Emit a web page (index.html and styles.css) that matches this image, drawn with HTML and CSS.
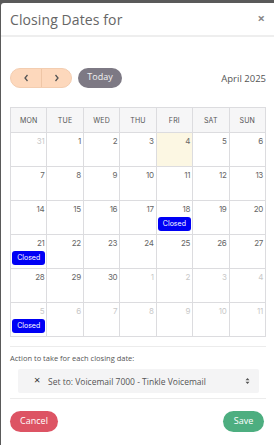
FILE: index.html
```html
<!DOCTYPE html>
<html>
<head>
<meta charset="utf-8">
<link rel="stylesheet" href="styles.css">
</head>
<body>
<div class="modal">
  <div class="modal-header">
    <span class="title">Closing Dates for</span>
    <span class="close">&times;</span>
  </div>
  <div class="modal-body">
    <div class="toolbar">
      <div class="left">
        <div class="navgroup">
          <button class="nav">
            <svg width="7" height="8" viewBox="0 0 7 8"><path d="M4.5 1 L2 4 L4.5 7" fill="none" stroke="#555" stroke-width="1.3"/></svg>
          </button>
          <button class="nav">
            <svg width="7" height="8" viewBox="0 0 7 8"><path d="M2.5 1 L5 4 L2.5 7" fill="none" stroke="#555" stroke-width="1.3"/></svg>
          </button>
        </div>
        <button class="today">Today</button>
      </div>
      <div class="month">April 2025</div>
    </div>
    <table class="cal">
      <thead>
        <tr><th>MON</th><th>TUE</th><th>WED</th><th>THU</th><th>FRI</th><th>SAT</th><th>SUN</th></tr>
      </thead>
      <tbody>
        <tr><td class="other"><span class="num">31</span></td><td><span class="num">1</span></td><td><span class="num">2</span></td><td><span class="num">3</span></td><td class="today-cell"><span class="num">4</span></td><td><span class="num">5</span></td><td><span class="num">6</span></td></tr>
        <tr><td><span class="num">7</span></td><td><span class="num">8</span></td><td><span class="num">9</span></td><td><span class="num">10</span></td><td><span class="num">11</span></td><td><span class="num">12</span></td><td><span class="num">13</span></td></tr>
        <tr><td><span class="num">14</span></td><td><span class="num">15</span></td><td><span class="num">16</span></td><td><span class="num">17</span></td><td><span class="num">18</span><span class="badge">Closed</span></td><td><span class="num">19</span></td><td><span class="num">20</span></td></tr>
        <tr><td><span class="num">21</span><span class="badge">Closed</span></td><td><span class="num">22</span></td><td><span class="num">23</span></td><td><span class="num">24</span></td><td><span class="num">25</span></td><td><span class="num">26</span></td><td><span class="num">27</span></td></tr>
        <tr><td><span class="num">28</span></td><td><span class="num">29</span></td><td><span class="num">30</span></td><td class="other"><span class="num">1</span></td><td class="other"><span class="num">2</span></td><td class="other"><span class="num">3</span></td><td class="other"><span class="num">4</span></td></tr>
        <tr><td class="other"><span class="num">5</span><span class="badge">Closed</span></td><td class="other"><span class="num">6</span></td><td class="other"><span class="num">7</span></td><td class="other"><span class="num">8</span></td><td class="other"><span class="num">9</span></td><td class="other"><span class="num">10</span></td><td class="other"><span class="num">11</span></td></tr>
      </tbody>
    </table>
    <hr class="sep">
    <div class="action-label">Action to take for each closing date:</div>
    <div class="select">
      <span class="x">&times;</span>
      <span class="value">Set to: Voicemail 7000 - Tinkle Voicemail</span>
      <svg class="arrows" width="5" height="8" viewBox="0 0 5 8"><path d="M0.5 3.2 L2.5 1 L4.5 3.2 Z M0.5 4.8 L2.5 7 L4.5 4.8 Z" fill="#555"/></svg>
    </div>
    <hr class="sep sep2">
    <div class="footer">
      <button class="btn cancel">Cancel</button>
      <button class="btn save">Save</button>
    </div>
  </div>
</div>
</body>
</html>
```

FILE: styles.css
```css
* { box-sizing: border-box; }
html, body { margin: 0; padding: 0; }
body {
  background: #5a5a5a;
  width: 274px;
  height: 445px;
  overflow: hidden;
  font-family: "Open Sans", "Liberation Sans", sans-serif;
}
.modal {
  margin: 3px 0 0 1px;
  background: #fff;
  height: 442px;
  border-top-left-radius: 3px;
}
.modal-header {
  height: 34px;
  display: flex;
  align-items: center;
  justify-content: space-between;
  padding: 0 9px 0 9px;
  border-bottom: 2px solid #eeeeee;
}
.title {
  font-size: 14px;
  color: #666;
  letter-spacing: 0.1px;
}
.close {
  font-size: 13px;
  font-weight: bold;
  color: #888;
  margin-top: -2px;
}
.modal-body {
  padding: 31px 8px 0 9px;
}
.toolbar {
  display: flex;
  align-items: center;
  justify-content: space-between;
  height: 20px;
}
.left { display: flex; align-items: center; gap: 6px; }
.navgroup {
  display: flex;
  height: 20px;
  background: #fdd8bc;
  border: 1px solid #f3cdb0;
  border-radius: 10px;
  overflow: hidden;
}
.nav {
  width: 30px;
  height: 100%;
  border: none;
  background: transparent;
  padding: 0;
  display: flex;
  align-items: center;
  justify-content: center;
}
.nav + .nav { border-left: 1px solid #efc6a6; }
.today {
  height: 20px;
  width: 44px;
  border: none;
  border-radius: 10px;
  background: #7d7984;
  color: #f2f2f2;
  font-family: inherit;
  font-size: 9px;
  padding: 0 0 3px 0;
}
.month {
  font-size: 9.5px;
  color: #555;
  margin-right: 0;
}
.cal {
  margin-top: 19px;
  width: 256px;
  border-collapse: collapse;
  table-layout: fixed;
  font-family: "Inter", "Liberation Sans", sans-serif;
}
.cal th, .cal td { border: 1px solid #dcdcdf; }
.cal th {
  height: 25px;
  background: #f6f6f7;
  font-size: 7px;
  font-weight: normal;
  color: #555;
  text-align: center;
  letter-spacing: 0.2px;
}
.cal td {
  height: 34px;
  vertical-align: top;
  padding: 0;
}
.num {
  display: block;
  text-align: right;
  font-size: 8px;
  color: #666;
  padding: 3px 2px 0 0;
  line-height: 10px;
  letter-spacing: -0.3px;
}
.other .num { color: #c8c8c8; }
.today-cell { background: #fcf7e3; }
.badge {
  display: block;
  margin: 3px 1px 0 1px;
  height: 14px;
  line-height: 14px;
  background: #0000f5;
  color: #fff;
  font-size: 7px;
  border-radius: 3px;
  text-align: center;
}
.sep {
  border: none;
  border-top: 1px solid #ececec;
  margin: 9px 0 0 0;
}
.action-label {
  font-size: 7.5px;
  color: #555;
  margin-top: 6px;
  height: 11px;
}
.select {
  margin: 5px 7px 0 8px;
  height: 24px;
  background: #f4f4f5;
  display: flex;
  align-items: center;
  padding: 0 9px 0 0;
  border-radius: 2px;
}
.select .x {
  font-size: 11px;
  color: #333;
  margin-left: 16px;
  width: 14px;
  margin-top: -3px;
}
.select .value {
  font-size: 8.5px;
  color: #555;
  flex: 1;
}
.sep2 { margin-top: 5px; }
.footer {
  display: flex;
  justify-content: space-between;
  margin-top: 12px;
}
.btn {
  height: 21px;
  border: none;
  border-radius: 11px;
  color: #fff;
  font-family: inherit;
  font-size: 9px;
  padding: 0 0 2px 0;
}
.cancel { width: 48px; background: #dd5464; }
.save { width: 41px; background: #4dae80; margin-right: 2px; }
```
